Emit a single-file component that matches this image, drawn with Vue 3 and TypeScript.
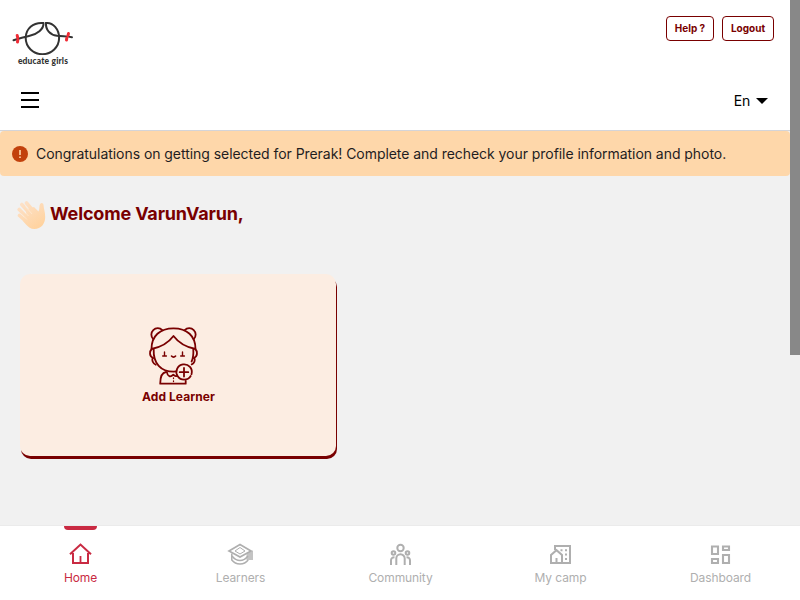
<script setup lang="ts">
import { ref } from 'vue'

interface NavItem {
  id: string
  label: string
}

const navItems: NavItem[] = [
  { id: 'home', label: 'Home' },
  { id: 'learners', label: 'Learners' },
  { id: 'community', label: 'Community' },
  { id: 'camp', label: 'My camp' },
  { id: 'dashboard', label: 'Dashboard' },
]
const active = ref('home')
const language = ref('En')
const userName = 'VarunVarun'
</script>

<template>
  <div class="screen">
    <div class="viewport">
      <main class="content">
        <header class="header">
          <div class="brand-row">
            <div class="logo">
              <svg width="62" height="34" viewBox="0 0 62 34" fill="none">
                <g stroke="#333" stroke-width="2" stroke-linecap="round">
                  <path d="M31 2C21 1.200 13.700 8 13.700 17a16.700 16.200 0 0 0 33.400 0C47.100 8 41 1.200 34 2" />
                  <path d="M1.500 19.200C8 17 12 15.900 17 15 25 13.500 32 8 31.500 2" />
                  <path d="M34 2C33.500 9 38 13.800 45 14.800 51 15.500 55 15.200 60 16.200" />
                </g>
                <path d="M5.200 14.500l.5 2.200M5.500 21l.3-2M56.500 12.500l-.5 2M54.500 19l.3-2" stroke="#f02b35" stroke-width="3" stroke-linecap="round" />
              </svg>
              <span class="logo-text">educate girls</span>
            </div>
            <div class="actions">
              <button class="outline-btn help">Help ?</button>
              <button class="outline-btn logout">Logout</button>
            </div>
          </div>
          <div class="menu-row">
            <button class="menu-btn" aria-label="Menu">
              <span></span><span></span><span></span>
            </button>
            <button class="lang">
              {{ language }}
              <svg width="12" height="6" viewBox="0 0 12 6"><path d="M0 0h12L6 6z" fill="#000" /></svg>
            </button>
          </div>
        </header>

        <div class="alert">
          <svg width="16" height="16" viewBox="0 0 16 16">
            <circle cx="8" cy="8" r="8" fill="#c2410c" />
            <path d="M8 4v5M8 10.500v1.500" stroke="#fed7aa" stroke-width="1.600" />
          </svg>
          <span>Congratulations on getting selected for Prerak! Complete and recheck your profile information and photo.</span>
        </div>

        <div class="welcome">
          <svg width="29" height="30" viewBox="0 0 29 30">
            <defs>
              <linearGradient id="hand" gradientUnits="userSpaceOnUse" x1="4" y1="3" x2="20" y2="27">
                <stop offset="0" stop-color="#fde1c8" />
                <stop offset="1" stop-color="#ffd3a0" />
              </linearGradient>
            </defs>
            <path d="M9.500 3l10 12M4.800 4.500l12 13.500M2.200 9.500l12 12M2.500 15.500l10 9" stroke="url(#hand)" stroke-linecap="round" stroke-width="3.600" />
            <path d="M10.500 9l6.500-2 4.500 4.500c1.500-3 .3-6 1.800-7.700 1.200-1.400 3-.6 3.200 1.200.2 3.500 1.700 7 1.700 12 0 7-4.300 12-10.700 12-4 0-6-2-8.500-4.500L6 21z" fill="url(#hand)" />
            <path d="M5.500 9.500l6 6.500M8.500 6.500l6.500 7.500M4 13.500l6 6" stroke="#fff3e4" stroke-width=".5" />
          </svg>
          <h1>Welcome {{ userName }},</h1>
        </div>

        <section class="cards">
          <button class="card">
            <svg width="52" height="61" viewBox="0 0 52 61" fill="none" stroke="#790000" stroke-width="1.800" stroke-linecap="round" stroke-linejoin="round">
              <path d="M5.200 14.100A6.200 6.200 0 1 1 14.300 5.100M36.700 5.100a6.200 6.200 0 1 1 9.100 9" />
              <path d="M3.500 24C3.500 11 12 3.300 25.500 3.300S47.500 11 47.500 24C37 22 30 17 25.500 11 21 17 14 22 3.500 24z" />
              <path d="M5.700 24.500c-.6 14 7.300 22.200 19.800 22.200 3 0 5.500-.5 7.500-1.500M45.300 24.500c.3 5-.3 9-1.700 12" />
              <path d="M3.700 24c-2.500 2.500-2.500 7.500 1.600 9M47.300 24c2.500 2.500 2.500 7.500-1.600 9M4.500 33c-.7 3 .8 5.500 3.300 6.700M46.500 33c.7 3-.8 5.500-2.800 6.300" />
              <path d="M16.500 27v4M14.700 31h3.700M34.500 27v4M32.700 31h3.700" stroke-width="1.400" />
              <path d="M23.500 31c1.200 1.500 2.900 1.500 4.100 0" stroke-width="1.600" />
              <path d="M18 47C14.500 47.500 12.200 51 12.200 58.700H37.700V56M19 47.500c.5 4 3.500 5 6.300 2.200 1.500 1.600 2.500 1.800 3.700 1" />
              <path d="M25.500 53v.5M25.500 56v.5" stroke-width="1.300" />
              <circle cx="36" cy="47.200" r="8" fill="#fcede2" stroke="none" />
              <path d="M42.700 51a7.700 7.700 0 1 1 .8-1.800" />
              <path d="M36 43v8.500M31.700 47.200h8.600" />
            </svg>
            <span>Add Learner</span>
          </button>
        </section>
      </main>
      <div class="scroll-track"><div class="scroll-thumb"></div></div>
    </div>

    <nav class="bottom-nav">
      <button
        v-for="item in navItems"
        :key="item.id"
        class="nav-item"
        :class="[item.id, { active: item.id === active }]"
        @click="active = item.id"
      >
        <span class="indicator"></span>
        <svg width="26" height="24" viewBox="0 0 26 24" fill="none" stroke="currentColor" stroke-width="2">
          <g v-if="item.id === 'home'">
            <path d="M3 12.300L13.500 2.500 24 12.300M6 11v10h15V11" />
            <path d="M13.500 21v-7" stroke-width="1.800" />
          </g>
          <g v-else-if="item.id === 'learners'">
            <path d="M2 9L13 2.500 24 9 13 15z" stroke-width="1.700" />
            <path d="M8 9L13 5.500 18 9 13 12z" stroke-width="1" />
            <path d="M4.800 11.500V18c4 5.200 12.400 5.200 16.400 0" stroke-width="1.500" />
            <path d="M5 14c4.500 6 11.500 6 16 0" stroke-width="1.400" />
            <path d="M19.500 11L26 8.500v9.500h-6.500z" fill="currentColor" fill-opacity=".75" stroke="none" />
          </g>
          <g v-else-if="item.id === 'community'">
            <circle cx="13.500" cy="6" r="3.200" />
            <circle cx="6.500" cy="11" r="1.800" />
            <circle cx="20.500" cy="11" r="1.800" />
            <path d="M9.300 23v-6.500a4.200 4.200 0 0 1 8.400 0V23M4 23v-4.500c0-2 1.200-3.300 3.500-3.300M23 23v-4.500c0-2-1.200-3.300-3.500-3.300" />
          </g>
          <g v-else-if="item.id === 'camp'">
            <path d="M8 8V4h15v17H4v-8l5.500-4.800L15 13v8M9.500 21v-5" />
            <path d="M13.500 8.200h2M18 8.200h2M18 12.500h2M18 17h2" />
          </g>
          <g v-else>
            <path d="M5 4.500h6v7.500H5zM16 4.500h6V8h-6zM5 17h6v4H5zM16 13h6v8h-6z" stroke-width="2.100" />
          </g>
        </svg>
        <span class="nav-label">{{ item.label }}</span>
      </button>
    </nav>
  </div>
</template>

<style>
body { overflow: hidden; }
</style>

<style scoped>
.screen {
  display: flex;
  flex-direction: column;
  width: 800px;
  height: 600px;
  overflow: hidden;
  background: #f1f1f1;
  font-family: Inter, sans-serif;
  color: #1f1d1f;
}
button {
  margin: 0;
  padding: 0;
  border: 0;
  background: none;
  font: inherit;
  color: inherit;
}
.viewport { display: flex; height: 525px; }
.content { width: 790px; }
.scroll-track { width: 10px; background: #f0f0f0; }
.scroll-thumb { height: 355px; background: #888; }
.header {
  box-sizing: border-box;
  height: 131px;
  background: #fff;
  border-bottom: 1px solid #d4d4d8;
}
.brand-row {
  display: flex;
  justify-content: space-between;
  height: 54px;
  padding: 16px 16px 0 12px;
}
.logo {
  display: flex;
  flex-direction: column;
  align-items: center;
  width: 62px;
  padding-top: 5px;
}
.logo-text {
  font: 900 8.5px/13px Lato, sans-serif;
  color: #333;
  letter-spacing: 0.15px;
  white-space: nowrap;
}
.actions { display: flex; gap: 8px; }
.outline-btn {
  box-sizing: border-box;
  height: 25px;
  padding-bottom: 1px;
  border: 1px solid #790000;
  border-radius: 4px;
  color: #790000;
  font-size: 10px;
  font-weight: 700;
}
.help { width: 48px; }
.logout { width: 52px; }
.menu-row {
  display: flex;
  align-items: center;
  justify-content: space-between;
  height: 60px;
  padding: 0 22px 0 21px;
}
.menu-btn { display: flex; flex-direction: column; gap: 5px; }
.menu-btn span { width: 18px; height: 2px; background: #000; }
.lang {
  display: flex;
  align-items: center;
  gap: 6px;
  padding-top: 1px;
  font-size: 14px;
  letter-spacing: -0.2px;
  color: #000;
}
.alert {
  display: flex;
  align-items: center;
  gap: 8px;
  height: 45px;
  padding-left: 12px;
  border-radius: 4px;
  background: #fed7aa;
  font-size: 14px;
  letter-spacing: -0.05px;
  white-space: nowrap;
}
.welcome {
  display: flex;
  align-items: center;
  gap: 4px;
  padding: 23px 0 0 17px;
  height: 32px;
}
.welcome h1 {
  margin: 0 0 2px;
  color: #790000;
  font-size: 18px;
  font-weight: 700;
  line-height: 24px;
  letter-spacing: -0.16px;
}
.cards { padding: 43px 0 0 20px; }
.card {
  display: flex;
  flex-direction: column;
  align-items: center;
  box-sizing: border-box;
  width: 316px;
  height: 182px;
  padding: 51px 0 0 1px;
  border-radius: 10px;
  background: #fcede2;
  box-shadow: 1px 3px 0 #790000;
  color: #790000;
  font-size: 12px;
  font-weight: 700;
  line-height: 22px;
  letter-spacing: 0.06px;
}
.card svg { margin-right: 10px; }
.bottom-nav {
  display: flex;
  box-sizing: border-box;
  height: 75px;
  border-top: 1px solid #ebebeb;
  background: #fff;
}
.nav-item {
  display: flex;
  flex: 1;
  flex-direction: column;
  align-items: center;
  color: #afafaf;
  font-size: 12px;
}
.indicator { width: 33px; height: 4px; border-radius: 0 0 4px 4px; }
.nav-item svg { margin-top: 12px; }
.nav-label {
  margin-top: 4px;
  padding-left: 1px;
  line-height: 16px;
  letter-spacing: -0.1px;
}
.active { color: #c92a42; }
.active .indicator { background: #c92a42; }
</style>
